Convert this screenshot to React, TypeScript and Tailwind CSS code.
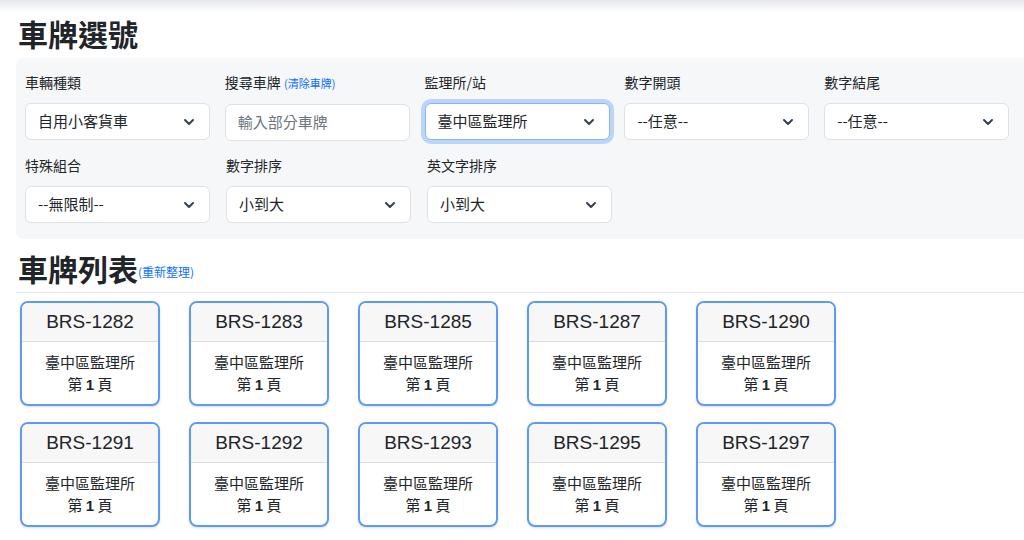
import React from 'react';

const Chevron = () => (
  <svg className="w-4 h-4 text-gray-700" viewBox="0 0 16 16" fill="none" stroke="currentColor" strokeWidth="2" strokeLinecap="round" strokeLinejoin="round">
    <path d="M4 6l4 4 4-4" />
  </svg>
);

function Select({ value, focused = false }: { value: string; focused?: boolean }) {
  return (
    <div
      className={`h-[37px] w-[185px] rounded-md bg-white flex items-center justify-between pl-3 pr-3 text-[15px] text-[#212529] border ${
        focused ? 'border-[#86b7fe] ring-4 ring-[#0d6efd]/25' : 'border-[#dee2e6]'
      }`}
    >
      <span>{value}</span>
      <Chevron />
    </div>
  );
}

function Field({ label, children }: { label: React.ReactNode; children: React.ReactNode }) {
  return (
    <div className="w-[201px] flex flex-col gap-[11px]">
      <div className="text-[14px] text-[#212529] leading-[20px]">{label}</div>
      {children}
    </div>
  );
}

const plates = ['1282', '1283', '1285', '1287', '1290', '1291', '1292', '1293', '1295', '1297'];

export default function App() {
  return (
    <div className="w-[1024px] h-[540px] overflow-hidden bg-white text-[#212529]" style={{ fontFamily: '"Noto Sans CJK TC", "Liberation Sans", sans-serif' }}>
      <div className="h-[12px] bg-gradient-to-b from-gray-200 to-white" />
      <div className="pl-4">
        <h1 className="text-[30px] font-bold leading-[40px] mt-[1px] ml-[2px]">車牌選號</h1>
        <div className="mt-[5px] bg-[#f6f7f9] rounded-l-lg pl-[9px] pt-[14px] pb-[16px] flex flex-col gap-[14px]">
          <div className="flex">
            <Field label="車輛種類"><Select value="自用小客貨車" /></Field>
            <Field label={<>搜尋車牌 <span className="text-[11px] text-[#0d6efd]">(清除車牌)</span></>}>
              <div className="h-[37px] w-[185px] rounded-md bg-white border border-[#dee2e6] flex items-center pl-3 text-[15px] text-[#6c757d]">輸入部分車牌</div>
            </Field>
            <Field label="監理所/站"><Select value="臺中區監理所" focused /></Field>
            <Field label="數字開頭"><Select value="--任意--" /></Field>
            <Field label="數字結尾"><Select value="--任意--" /></Field>
          </div>
          <div className="flex">
            <Field label="特殊組合"><Select value="--無限制--" /></Field>
            <Field label="數字排序"><Select value="小到大" /></Field>
            <Field label="英文字排序"><Select value="小到大" /></Field>
          </div>
        </div>
        <div className="mt-[10px] flex items-end border-b border-[#e5e7eb] pb-[5px]">
          <h2 className="text-[30px] font-bold leading-[38px] ml-[2px]">車牌列表</h2>
          <span className="text-[12px] text-[#0d6efd] mb-[6px]">(重新整理)</span>
        </div>
        <div className="grid grid-cols-[repeat(5,140px)] gap-x-[29px] gap-y-[16px] pl-[4px] pt-[8px]">
          {plates.map((p) => (
            <div key={p} className="h-[105px] rounded-lg border-2 border-[#5b9bf5] overflow-hidden flex flex-col shadow-sm">
              <div className="h-[39px] bg-[#f7f7f7] border-b border-[#dcdcdc] flex items-center justify-center text-[19px]" style={{ fontFamily: '"Liberation Sans", sans-serif' }}>
                BRS-{p}
              </div>
              <div className="flex-1 flex flex-col items-center justify-center text-[15px] leading-[22px]">
                <div>臺中區監理所</div>
                <div>第 <b style={{ fontFamily: '"Liberation Sans", sans-serif' }}>1</b> 頁</div>
              </div>
            </div>
          ))}
        </div>
      </div>
    </div>
  );
}
